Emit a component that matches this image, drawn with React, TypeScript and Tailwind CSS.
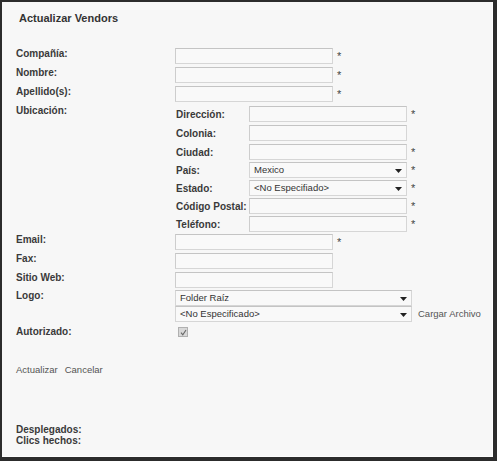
import React from 'react';

const font = { fontFamily: '"Liberation Sans", Arial, sans-serif' };

function TextBox() {
  return (
    <div className="w-[158px] h-[16px] bg-[#f9f9f9] border border-[#d6d6d6] border-t-[#c4c4c4] border-l-[#cdcdcd]" />
  );
}

function SelectBox({ value, width }: { value: string; width: string }) {
  return (
    <div
      className={`${width} h-[16px] bg-[#f9f9f9] border border-[#d6d6d6] border-t-[#c4c4c4] flex items-center justify-between pl-[4px] pr-[4px] text-[9.5px] text-[#333]`}
    >
      <span>{value}</span>
      <svg width="7" height="4" viewBox="0 0 7 4" className="mt-[1px]">
        <path d="M0 0H7L3.5 4Z" fill="#222" />
      </svg>
    </div>
  );
}

function Star() {
  return <span className="ml-[4px] text-[11px] leading-[11px] text-[#444] mt-[3px]">*</span>;
}

function Row({
  label,
  h = 'h-[19px]',
  children,
}: {
  label: string;
  h?: string;
  children?: React.ReactNode;
}) {
  return (
    <div className={`flex ${h}`}>
      <div className="w-[159px] text-[10px] font-bold text-[#3a3a3a] leading-[12px] pt-[1px]">{label}</div>
      <div className="flex items-start pt-[1px]">{children}</div>
    </div>
  );
}

function SubRow({
  label,
  h = 'h-[19px]',
  children,
}: {
  label: string;
  h?: string;
  children?: React.ReactNode;
}) {
  return (
    <div className={`flex ${h}`}>
      <div className="w-[74px] pl-[1px] text-[10px] font-bold text-[#3a3a3a] leading-[12px] pt-[4px]">{label}</div>
      <div className="flex items-start pt-[1px]">{children}</div>
    </div>
  );
}

export default function App() {
  return (
    <div className="w-[497px] h-[461px] bg-[#2c2c2c] pl-[2px] pt-[2px] pr-[4px] pb-[4px]" style={font}>
      <div className="w-full h-full bg-[#f7f7f7] border-r border-b border-[#fdfdfd] pl-[14px] flex flex-col">
        <div className="pt-[10px] pl-[3px] text-[11px] leading-[13px] font-bold text-[#333]">
          Actualizar Vendors
        </div>

        <div className="mt-[22px] flex flex-col">
          <Row label="Compañía:">
            <TextBox />
            <Star />
          </Row>
          <Row label="Nombre:">
            <TextBox />
            <Star />
          </Row>
          <Row label="Apellido(s):">
            <TextBox />
            <Star />
          </Row>

          <div className="flex">
            <div className="w-[159px] text-[10px] font-bold text-[#3a3a3a] leading-[12px] pt-[1px]">Ubicación:</div>
            <div className="flex flex-col pt-[1px]">
              <SubRow label="Dirección:">
                <TextBox />
                <Star />
              </SubRow>
              <SubRow label="Colonia:">
                <TextBox />
              </SubRow>
              <SubRow label="Ciudad:" h="h-[18px]">
                <TextBox />
                <Star />
              </SubRow>
              <SubRow label="País:" h="h-[18px]">
                <SelectBox value="Mexico" width="w-[158px]" />
                <Star />
              </SubRow>
              <SubRow label="Estado:" h="h-[18px]">
                <SelectBox value="<No Especifiado>" width="w-[158px]" />
                <Star />
              </SubRow>
              <SubRow label="Código Postal:" h="h-[18px]">
                <TextBox />
                <Star />
              </SubRow>
              <SubRow label="Teléfono:" h="h-[18px]">
                <TextBox />
                <Star />
              </SubRow>
            </div>
          </div>

          <Row label="Email:">
            <TextBox />
            <Star />
          </Row>
          <Row label="Fax:">
            <TextBox />
          </Row>
          <Row label="Sitio Web:" h="h-[18px]">
            <TextBox />
          </Row>
          <Row label="Logo:" h="h-[17px]">
            <SelectBox value="Folder Raíz" width="w-[237px]" />
          </Row>
          <div className="flex h-[20px]">
            <div className="w-[159px]" />
            <div className="flex items-start">
              <SelectBox value="<No Especificado>" width="w-[237px]" />
              <span className="ml-[6px] text-[9.5px] leading-[15px] text-[#555]">Cargar Archivo</span>
            </div>
          </div>
          <div className="flex h-[14px]">
            <div className="w-[159px] text-[10px] font-bold text-[#3a3a3a] leading-[12px]">Autorizado:</div>
            <div className="pl-[3px] pt-[1px]">
              <div className="w-[10px] h-[10px] bg-[#d8d8d8] border border-[#b0b0b0] flex items-center justify-center">
                <svg width="7" height="7" viewBox="0 0 7 7">
                  <path d="M1 3.6L2.8 5.8L6 1" stroke="#666" strokeWidth="1.1" fill="none" />
                </svg>
              </div>
            </div>
          </div>
        </div>

        <div className="mt-[24px] text-[9.5px] leading-[12px] text-[#555] flex gap-[7px]">
          <span>Actualizar</span>
          <span>Cancelar</span>
        </div>

        <div className="mt-[48px] text-[10px] leading-[11px] font-bold text-[#3a3a3a]">
          <div>Desplegados:</div>
          <div>Clics hechos:</div>
        </div>
      </div>
    </div>
  );
}
